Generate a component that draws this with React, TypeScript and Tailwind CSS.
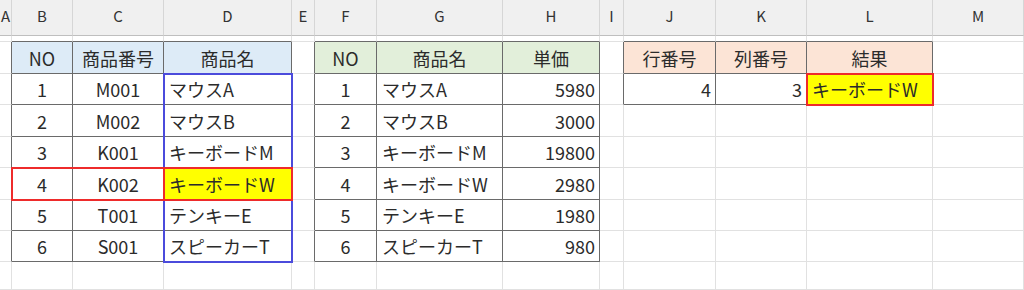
import React from "react";

const COLS = ["A", "B", "C", "D", "E", "F", "G", "H", "I", "J", "K", "L", "M"];

type Cell = { t?: string; align?: "l" | "c" | "r"; bg?: string };

const empty: Cell = {};

const t1Head: Cell[] = [
  { t: "NO", align: "c", bg: "blue" },
  { t: "商品番号", align: "c", bg: "blue" },
  { t: "商品名", align: "c", bg: "blue" },
];
const t2Head: Cell[] = [
  { t: "NO", align: "c", bg: "green" },
  { t: "商品名", align: "c", bg: "green" },
  { t: "単価", align: "c", bg: "green" },
];
const t3Head: Cell[] = [
  { t: "行番号", align: "c", bg: "orange" },
  { t: "列番号", align: "c", bg: "orange" },
  { t: "結果", align: "c", bg: "orange" },
];

const data: [string, string, string, string][] = [
  ["1", "M001", "マウスA", "5980"],
  ["2", "M002", "マウスB", "3000"],
  ["3", "K001", "キーボードM", "19800"],
  ["4", "K002", "キーボードW", "2980"],
  ["5", "T001", "テンキーE", "1980"],
  ["6", "S001", "スピーカーT", "980"],
];

function buildRow(r: number): Cell[] {
  const row: Cell[] = COLS.map(() => empty);
  if (r === 2) {
    row[1] = t1Head[0];
    row[2] = t1Head[1];
    row[3] = t1Head[2];
    row[5] = t2Head[0];
    row[6] = t2Head[1];
    row[7] = t2Head[2];
    row[9] = t3Head[0];
    row[10] = t3Head[1];
    row[11] = t3Head[2];
  } else if (r >= 3 && r <= 8) {
    const d = data[r - 3];
    row[1] = { t: d[0], align: "c" };
    row[2] = { t: d[1], align: "c" };
    row[3] = { t: d[2], align: "l", bg: r === 6 ? "yellow" : undefined };
    row[5] = { t: d[0], align: "c" };
    row[6] = { t: d[2], align: "l" };
    row[7] = { t: d[3], align: "r" };
    if (r === 3) {
      row[9] = { t: "4", align: "r" };
      row[10] = { t: "3", align: "r" };
      row[11] = { t: "キーボードW", align: "l", bg: "yellow" };
    }
  }
  return row;
}

function inTable(c: number, r: number): boolean {
  if (r >= 2 && r <= 8 && c >= 1 && c <= 3) return true;
  if (r >= 2 && r <= 8 && c >= 5 && c <= 7) return true;
  if (r >= 2 && r <= 3 && c >= 9 && c <= 11) return true;
  return false;
}

function bgClass(bg?: string): string {
  switch (bg) {
    case "blue":
      return "bg-[#ddebf7]";
    case "green":
      return "bg-[#e2efda]";
    case "orange":
      return "bg-[#fce4d6]";
    case "yellow":
      return "bg-[#ffff00]";
    default:
      return "bg-white";
  }
}

function alignClass(a?: string): string {
  if (a === "c") return "justify-center";
  if (a === "r") return "justify-end pr-[4px]";
  return "justify-start pl-[5px]";
}

const ROWS = 10;

export default function App() {
  const cells: React.ReactNode[] = [];

  COLS.forEach((c, i) => {
    cells.push(
      <div
        key={`h-${i}`}
        className="flex items-center justify-center bg-[#f0f0f0] border-r border-b border-r-[#d6d6d6] border-b-[#bfbfbf] text-[15px] text-[#333] pb-[3px]"
      >
        <span className="whitespace-nowrap">{c}</span>
      </div>
    );
  });

  for (let r = 1; r < ROWS; r++) {
    const row = buildRow(r);
    row.forEach((cell, c) => {
      const rDark = inTable(c, r) || inTable(c + 1, r);
      const bDark = inTable(c, r) || inTable(c, r + 1);
      const rCls = rDark ? "border-r-[#6a6a6a]" : "border-r-[#e1e1e1]";
      const bCls = bDark ? "border-b-[#6a6a6a]" : "border-b-[#e1e1e1]";
      cells.push(
        <div
          key={`${r}-${c}`}
          className={`flex items-center border-r border-b ${rCls} ${bCls} ${bgClass(cell.bg)} ${alignClass(cell.align)} overflow-visible`}
        >
          {cell.t ? (
            <span className="whitespace-nowrap text-[18px] leading-none text-[#2b2b2b]">{cell.t}</span>
          ) : null}
        </div>
      );
    });
  }

  return (
    <div
      className="relative w-[1024px] h-[290px] overflow-hidden bg-white"
      style={{ fontFamily: '"Noto Sans CJK JP", "Noto Sans", sans-serif' }}
    >
      <div className="grid grid-cols-[12px_61px_91px_128px_23px_62px_126px_97px_24px_92px_91px_126px_1fr] grid-rows-[36px_6px_32px_31px_32px_31px_32px_31px_31px_28px]">
        {cells}
      </div>
      {/* highlight boxes drawn over the cells */}
      <div className="absolute left-[11px] top-[167px] w-[154px] h-[34px] border-2 border-[#ee2b2b]" />
      <div className="absolute left-[163px] top-[73px] w-[130px] h-[190px] border-2 border-[#4b4bdc]" />
      <div className="absolute left-[163px] top-[167px] w-[130px] h-[34px] border-2 border-[#ee2b2b]" />
      <div className="absolute left-[806px] top-[73px] w-[128px] h-[33px] border-2 border-[#ee2b2b]" />
    </div>
  );
}
